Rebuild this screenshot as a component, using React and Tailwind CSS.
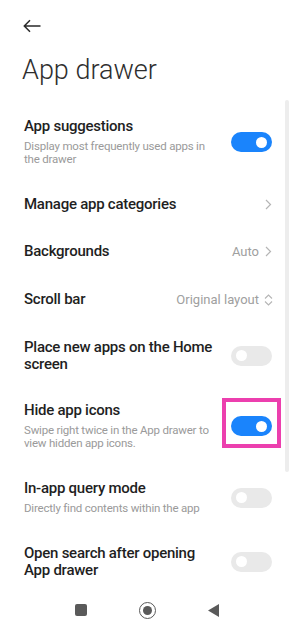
import React from "react";

function Toggle({ on }) {
  return (
    <div
      className={
        "flex items-center w-[41px] h-[20px] rounded-full shrink-0 px-[5px] " +
        (on ? "bg-[#1a84fc] justify-end" : "bg-[#e9e9e9] justify-start")
      }
    >
      <div className="w-[11px] h-[11px] rounded-full bg-white" />
    </div>
  );
}

function Chevron() {
  return (
    <svg width="7" height="11" viewBox="0 0 7 11" className="shrink-0">
      <path d="M1 1 L5.5 5.5 L1 10" fill="none" stroke="#b5b5b5" strokeWidth="1.2" />
    </svg>
  );
}

function UpDown() {
  return (
    <svg width="9" height="12" viewBox="0 0 9 12" className="shrink-0">
      <path d="M1 4.5 L4.5 1 L8 4.5 M1 7.5 L4.5 11 L8 7.5" fill="none" stroke="#b5b5b5" strokeWidth="1.1" />
    </svg>
  );
}

function Row({ title, sub, right }) {
  return (
    <div className="flex items-center py-[14.5px] pl-[24px] pr-[22px] gap-3">
      <div className="flex-1 min-w-0">
        <div className="text-[15px] leading-[17px] font-medium tracking-[-0.25px] text-[#1f1f1f]">
          {title}
        </div>
        {sub && (
          <div className="mt-[5px] mb-[1px] text-[11.5px] leading-[13px] tracking-[-0.2px] text-[#9a9a9a]">
            {sub}
          </div>
        )}
      </div>
      {right}
    </div>
  );
}

export default function App() {
  return (
    <div
      className="relative w-[294px] h-[628px] bg-white overflow-hidden flex flex-col"
      style={{ fontFamily: "Roboto, 'Noto Sans', sans-serif" }}
    >
      {/* header */}
      <div className="pl-[23px] pt-[19px] h-[14px] box-content">
        <svg width="18" height="14" viewBox="0 0 18 14">
          <path d="M17.5 7 H1.5 M7 1.2 L1.3 7 L7 12.8" fill="none" stroke="#2a2a2a" strokeWidth="1.5" />
        </svg>
      </div>
      <div className="mt-[21px] pl-[22px] text-[27px] leading-[32px] font-light text-[#2e2e2e]">
        App drawer
      </div>

      <div className="mt-[17px]">
        <Row
          title="App suggestions"
          sub="Display most frequently used apps in the drawer"
          right={<Toggle on />}
        />
        <Row title="Manage app categories" right={<Chevron />} />
        <Row
          title="Backgrounds"
          right={
            <div className="flex items-center gap-[6px]">
              <span className="text-[13px] text-[#a0a0a0]">Auto</span>
              <Chevron />
            </div>
          }
        />
        <Row
          title="Scroll bar"
          right={
            <div className="flex items-center gap-[5px] -mr-[1px]">
              <span className="text-[13px] text-[#a0a0a0]">Original layout</span>
              <UpDown />
            </div>
          }
        />
        <Row title="Place new apps on the Home screen" right={<Toggle />} />
        <Row
          title="Hide app icons"
          sub="Swipe right twice in the App drawer to view hidden app icons."
          right={<Toggle on />}
        />
        <Row
          title="In-app query mode"
          sub="Directly find contents within the app"
          right={<Toggle />}
        />
        <Row title="Open search after opening App drawer" right={<Toggle />} />
      </div>

      {/* nav bar */}
      <div className="mt-auto h-[38px] flex items-center justify-center gap-[52px] pb-[1px]">
        <div className="w-[12px] h-[12px] rounded-[2px] bg-[#5a5a5a]" />
        <div className="w-[17px] h-[17px] rounded-full border-[1.7px] border-[#5a5a5a] flex items-center justify-center">
          <div className="w-[9px] h-[9px] rounded-full bg-[#5a5a5a]" />
        </div>
        <svg width="11" height="13" viewBox="0 0 11 13">
          <path d="M11 0 L11 13 L0 6.5 Z" fill="#5a5a5a" />
        </svg>
      </div>

      {/* highlight box (overlay) */}
      <div className="absolute left-[222px] top-[398px] w-[59px] h-[50px] border-[4px] border-[#ec3fae]" />

      {/* scrollbar (overlay) */}
      <div className="absolute left-[285px] top-[100px] w-[4px] h-[372px] rounded-full bg-[#ededed]" />
    </div>
  );
}
